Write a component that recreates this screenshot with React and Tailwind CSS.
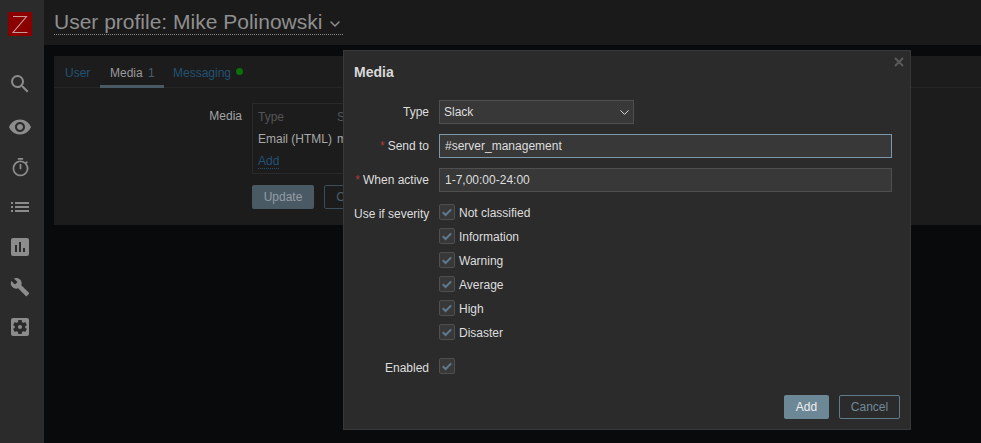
import React from 'react';
import { ChevronDown } from 'lucide-react';
import {
  MdSearch,
  MdVisibility,
  MdOutlineTimer,
  MdList,
  MdAssessment,
  MdBuild,
  MdSettingsApplications,
} from 'react-icons/md';

const navIcons = [
  { Icon: MdVisibility, size: 24 },
  { Icon: MdOutlineTimer, size: 21 },
  { Icon: MdList, size: 24 },
  { Icon: MdAssessment, size: 24 },
  { Icon: MdBuild, size: 20 },
  { Icon: MdSettingsApplications, size: 24 },
];

const severities = ['Not classified', 'Information', 'Warning', 'Average', 'High', 'Disaster'];

function Sidebar() {
  return (
    <aside className="w-[44px] shrink-0 h-full bg-[#2b2b2b] flex flex-col text-[#8c8c8c]">
      <div className="ml-2 mt-3 w-6 h-6 bg-[#8a0000] flex items-center justify-center">
        {/* logo */}
        <svg width="24" height="24" viewBox="0 0 24 24" fill="none" stroke="#c79a9a" strokeWidth="1.1">
          <path d="M5 4.5H18.5L5 20.5H19.5" />
        </svg>
      </div>
      <div className="h-10 mt-7 mb-[3px] w-10 flex items-center justify-center">
        <MdSearch size={24} />
      </div>
      {navIcons.map(({ Icon, size }, i) => (
        <div key={i} className="h-10 w-10 flex items-center justify-center">
          <Icon size={size} />
        </div>
      ))}
    </aside>
  );
}

function Background() {
  return (
    <main className="flex-1 min-w-0 h-full flex flex-col bg-[#090a0c]">
      <header className="h-[45px] shrink-0 bg-[#1a1a1a] pl-[10px] flex items-start">
        <div className="mt-[10px] h-[25px] flex items-center border-b border-dotted border-[#8a8a8a] text-[21px] leading-[24px] text-[#8f8f8f]">
          <span>User profile: Mike Polinowski</span>
          <ChevronDown size={16} strokeWidth={2.2} className="ml-[5px] mt-[3px] text-[#8f8f8f]" />
        </div>
      </header>

      <section className="ml-[10px] mt-[11px] h-[169px] bg-[#1c1c1c]">
        <nav className="h-[32px] flex border-b border-[#262626] text-[12px]">
          <div className="w-[46px] pl-[11px] pt-[8px] text-[#235274]">User</div>
          <div className="w-[64px] pl-[10px] pt-[8px] h-[32px] border-b-[3px] border-[#4a5a64] text-[#9a9a9a]">
            Media <span className="ml-[2px] text-[#4d5f6b]">1</span>
          </div>
          <div className="pl-[9px] pt-[8px] flex items-start text-[#235274]">
            <span>Messaging</span>
            <span className="ml-[5px] mt-[4px] w-[7px] h-[7px] rounded-full bg-[#0a700a]" />
          </div>
        </nav>
        <div className="flex pt-[15px] text-[12px]">
          <div className="w-[188px] pt-[4px] text-right text-[#a3a3a3]">Media</div>
          <div className="ml-[10px]">
            {/* table runs on behind the dialog, only the first letter of the 2nd column shows */}
            <div className="w-[400px] h-[71px] border border-[#292929] pl-[5px] pt-[2px] flex flex-col text-[#a8a8a8]">
              <div className="h-[22px] flex items-center text-[#555555]">
                <span className="w-[79px]">Type</span>
                <span>S</span>
              </div>
              <div className="h-[22px] flex items-center">
                <span className="w-[79px]">Email (HTML)</span>
                <span>m</span>
              </div>
              <div className="h-[22px] flex items-center">
                <span className="text-[#235274] border-b border-dotted border-[#235274] leading-[14px]">Add</span>
              </div>
            </div>
            <div className="mt-[11px] flex gap-[10px]">
              <div className="w-[62px] h-[24px] rounded-[2px] bg-[#4a5a65] text-[#929da3] flex items-center justify-center">
                Update
              </div>
              <div className="w-[62px] h-[24px] rounded-[2px] border border-[#3b4d57] text-[#4d5f6b] flex items-center justify-center">
                Cancel
              </div>
            </div>
          </div>
        </div>
      </section>
    </main>
  );
}

function Check() {
  return (
    <div className="w-4 h-4 shrink-0 rounded-[2px] bg-[#383838] border border-[#4f4f4f] flex items-center justify-center">
      <svg width="12" height="12" viewBox="0 0 12 12" fill="none" stroke="#5f7a8c" strokeWidth="2">
        <path d="M1.8 6.2L4.6 9L10.2 3.4" />
      </svg>
    </div>
  );
}

function Label({ required, children, className = '' }) {
  return (
    <div className={`w-[75px] mr-[10px] shrink-0 text-right whitespace-nowrap ${className}`}>
      {required && <span className="text-[#b03a3a] mr-[3px]">*</span>}
      {children}
    </div>
  );
}

function MediaDialog() {
  return (
    <div className="absolute left-[343px] top-[50px] w-[568px] h-[380px] bg-[#2b2b2b] border border-[#383838] text-[12px] text-[#dedede] px-[10px]">
      <svg
        width="14"
        height="14"
        viewBox="0 0 14 14"
        fill="none"
        stroke="#5a5a5a"
        strokeWidth="2"
        className="absolute right-[4px] top-[4px]"
      >
        <path d="M3 3L11 11M11 3L3 11" />
      </svg>
      <h4 className="mt-[13px] h-[16px] text-[14px] leading-[16px] font-bold text-[#d9d9d9]">Media</h4>

      <div className="mt-[20px] flex items-center h-[24px]">
        <Label>Type</Label>
        <div className="w-[195px] h-[24px] bg-[#383838] border border-[#4f4f4f] pl-[4px] pr-[1px] flex items-center justify-between">
          <span>Slack</span>
          <ChevronDown size={15} strokeWidth={1.6} />
        </div>
      </div>

      <div className="mt-[10px] flex items-center h-[24px]">
        <Label required>Send to</Label>
        <div className="w-[453px] h-[24px] bg-[#383838] border border-[#7c98a8] pl-[5px] flex items-center">
          #server_management
        </div>
      </div>

      <div className="mt-[10px] flex items-center h-[24px]">
        <Label required>When active</Label>
        <div className="w-[453px] h-[24px] bg-[#383838] border border-[#4f4f4f] pl-[5px] flex items-center">
          1-7,00:00-24:00
        </div>
      </div>

      <div className="mt-[12px] flex items-start">
        <Label className="leading-[20px]">Use if severity</Label>
        <div className="flex flex-col gap-2">
          {severities.map((name) => (
            <div key={name} className="h-4 flex items-center gap-1">
              <Check />
              <span className="mt-[1px]">{name}</span>
            </div>
          ))}
        </div>
      </div>

      <div className="mt-[18px] flex items-start">
        <Label className="leading-[20px]">Enabled</Label>
        <Check />
      </div>

      <div className="mt-[17px] flex justify-end gap-[10px]">
        <div className="w-[45px] h-[24px] rounded-[2px] bg-[#6c8796] text-[#f0f0f0] flex items-center justify-center">
          Add
        </div>
        <div className="w-[61px] h-[24px] rounded-[2px] border border-[#617a88] text-[#6f8a99] flex items-center justify-center">
          Cancel
        </div>
      </div>
    </div>
  );
}

export default function App() {
  return (
    <div className="relative w-[981px] h-[443px] overflow-hidden flex font-['Liberation_Sans',Arial,sans-serif]">
      <Sidebar />
      <Background />
      <MediaDialog />
    </div>
  );
}
